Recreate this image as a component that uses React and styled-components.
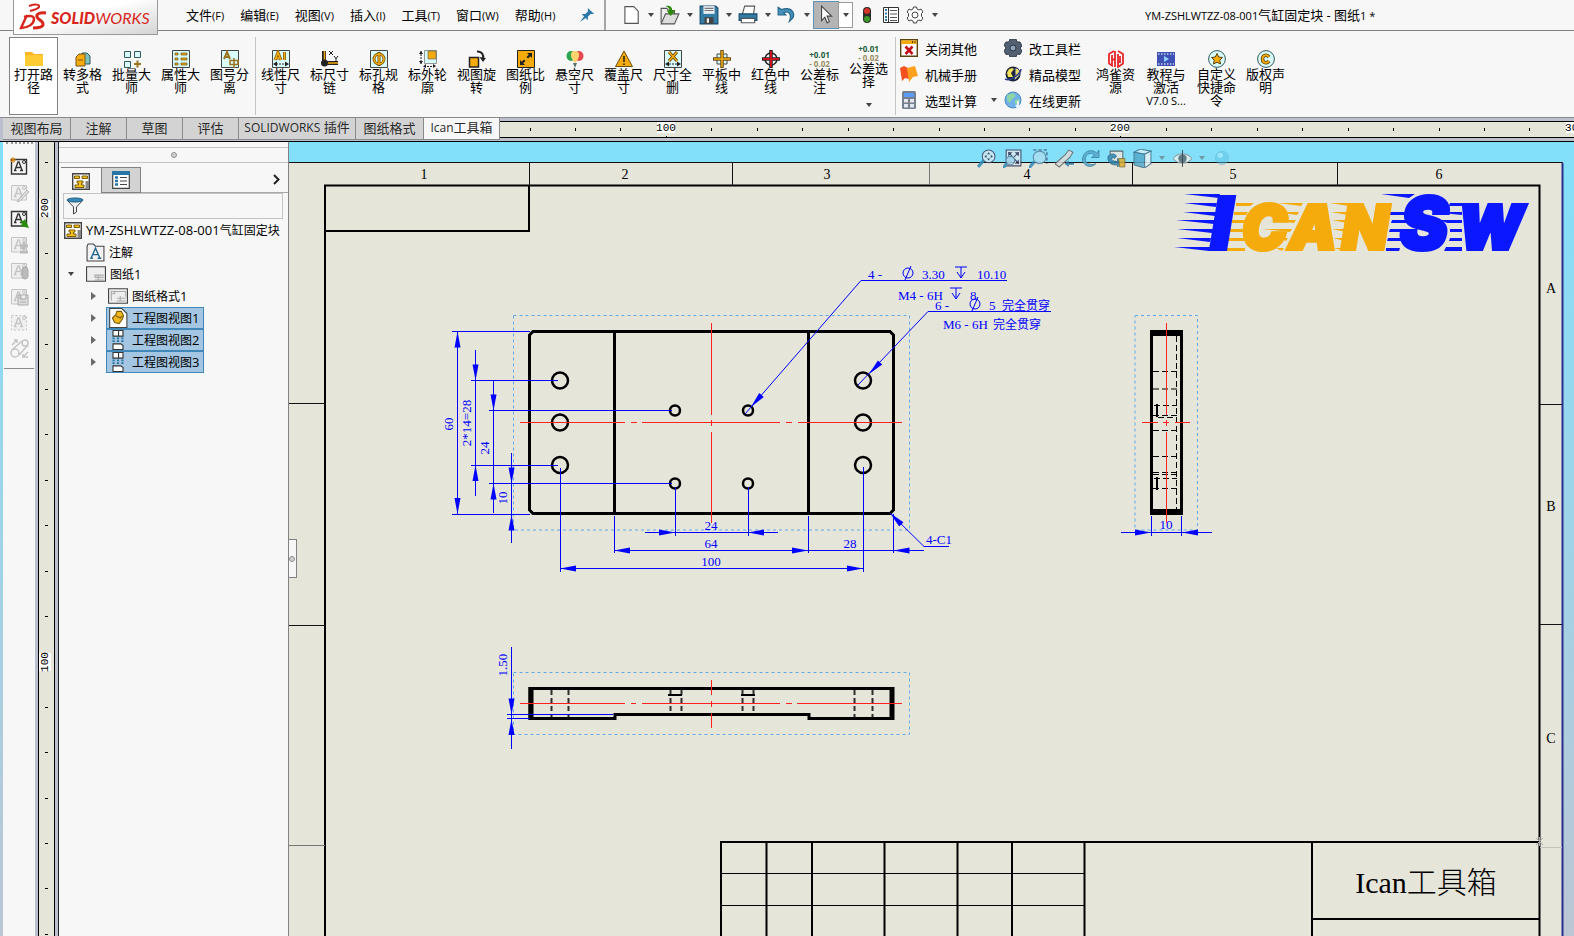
import React from "react";
import styled, { createGlobalStyle, css } from "styled-components";

const SANS = '"Open Sans", "Noto Sans CJK SC", sans-serif';
const DRAFT = '"Liberation Serif", "Noto Sans CJK SC", serif';

const GlobalStyle = createGlobalStyle`
  * { box-sizing: border-box; }
  body { margin: 0; background: #f7f7f7; font-family: ${SANS}; font-size: 13px; color: #000; }
  button, input { font: inherit; color: inherit; margin: 0; padding: 0; border: 0; background: none; }
  ul { list-style: none; margin: 0; padding: 0; }
  svg { display: block; flex: none; }
`;

const AppFrame = styled.div`
  display: flex;
  flex-direction: column;
  height: 100vh;
  overflow: hidden;
`;

/* ---------- title bar ---------- */

const TitleBar = styled.header`
  display: flex;
  align-items: center;
  height: 31px;
  flex: none;
  padding-left: 13px;
  border-bottom: 1px solid #828282;
`;

const Brand = styled.a`
  display: flex;
  align-items: center;
  align-self: flex-start;
  width: 145px;
  height: 35px;
  padding-left: 5px;
  position: relative;
  z-index: 2;
  border: 1px solid #9a9a9a;
  border-top: 0;
  background: linear-gradient(165deg, #ffffff 45%, #d4d4d4 100%);
  color: #d8261c;
  text-decoration: none;
  font: italic 900 16px Lato, sans-serif;
`;

const BrandLight = styled.span`
  font-weight: 400;
`;

const MenuList = styled.nav`
  display: flex;
  gap: 16px;
  padding-left: 28px;
`;

const MenuButton = styled.button`
  display: flex;
  align-items: baseline;
  line-height: 20px;
  white-space: nowrap;
`;

const Hotkey = styled.span`
  font-size: 11px;
`;

const PinButton = styled.button`
  margin-left: 24px;
`;

const QuickBar = styled.div`
  display: flex;
  align-items: center;
  height: 30px;
  margin-left: 9px;
  padding-left: 13px;
  border-left: 2px solid #a5a5a5;
`;

const QuickButton = styled.button`
  display: grid;
  place-items: center;
  width: 24px;
  height: 26px;
  ${(p) => p.$active && css`
    background: #b4b4b4;
    outline: 1px solid #5d93b8;
  `}
`;

const CaretButton = styled.button`
  display: grid;
  place-items: center;
  width: 15px;
  height: 26px;
  ${(p) => p.$framed && css`
    margin-right: 2px;
    border: 1px solid #9a9a9a;
    background: #fff;
  `}
`;

const DocTitle = styled.h1`
  flex: 1;
  margin: 0;
  padding-left: 4px;
  text-align: center;
  font-size: 13px;
  font-weight: 400;
  line-height: 20px;
  white-space: nowrap;
`;

const SmallLatin = styled.span`
  font-size: 11px;
`;

/* ---------- ribbon ---------- */

const Ribbon = styled.div`
  display: flex;
  height: 87px;
  flex: none;
  padding: 6px 0 2px 9px;
  border-bottom: 1px solid #8a8a8a;
`;

const RibbonGroup = styled.div`
  display: flex;
  padding-right: ${(p) => p.$end || 0}px;
  border-right: ${(p) => (p.$last ? 0 : 1)}px solid #c4c4c4;
`;

const RibbonButton = styled.button`
  display: flex;
  flex-direction: column;
  align-items: center;
  width: ${(p) => p.$width || 49}px;
  height: 78px;
  padding-top: ${(p) => (p.$raised ? 6 : 12)}px;
  border: 1px solid ${(p) => (p.$active ? "#828282" : "transparent")};
  background: ${(p) => (p.$active ? "#fff" : "transparent")};
`;

const RibbonLabel = styled.span`
  width: 40px;
  font-size: 13px;
  line-height: 13px;
  text-align: center;
  word-break: break-all;
`;

const RibbonNote = styled.span`
  font-size: 11px;
  line-height: 13px;
  white-space: nowrap;
`;

const Tolerance = styled.span`
  display: flex;
  flex-direction: column;
  height: 18px;
  color: ${(p) => p.color};
  font: 700 8px/9px "Open Sans", sans-serif;
  white-space: nowrap;
`;

const Minus = styled.span`
  color: #968c5e;
`;

const CaretSlot = styled.span`
  margin-top: 15px;
`;

const CommandGrid = styled.div`
  display: grid;
  grid-template-columns: 104px 87px;
  grid-auto-rows: 26px;
  padding-left: 4px;
  margin-top: -2px;
`;

const CommandButton = styled.button`
  display: flex;
  align-items: center;
  gap: 7px;
  white-space: nowrap;
`;

const CommandCaret = styled.span`
  margin-left: 7px;
`;

/* ---------- tab row and rulers ---------- */

const TabRow = styled.div`
  display: flex;
  height: 24px;
  flex: none;
  padding-left: 3px;
  border-bottom: 1px solid #000;
  background: #bcc0cc;
`;

const Tab = styled.button`
  width: ${(p) => p.$width}px;
  height: 22px;
  padding-bottom: 2px;
  border-right: 1px solid #8a8a8a;
  border-bottom: 1px solid #8a8a8a;
  background: ${(p) => (p.$active ? "#f7f7f7" : "#d3d3d3")};
  color: #2a2a2a;
  line-height: 18px;
  white-space: nowrap;
`;

const TabLatin = styled.span`
  font-size: 12px;
`;

const TopRuler = styled.div`
  flex: 1;
  min-width: 0;
  height: 17px;
  margin-top: 3px;
  overflow: hidden;
  border-top: 1px solid #000;
  border-bottom: 1px solid #000;
  background: #e5e5da;
`;

const SideRuler = styled.div`
  width: 23px;
  flex: none;
  overflow: hidden;
  border: solid #bcc0cc;
  border-width: 0 3px;
  background: #e5e5da;
`;

const RulerScale = styled.svg`
  width: 100%;
  height: 100%;
`;

const RulerText = styled.text`
  font: 11px "Liberation Mono", monospace;
  text-anchor: middle;
`;

/* ---------- work area ---------- */

const WorkArea = styled.div`
  display: flex;
  flex: 1;
  min-height: 0;
`;

const WindowEdge = styled.div`
  width: 3px;
  flex: none;
  background: linear-gradient(#82e0fa, #bcc6d4);
`;

const ToolRail = styled.div`
  display: flex;
  flex-direction: column;
  align-items: center;
  width: 32px;
  flex: none;
`;

const RailGrip = styled.div`
  width: 27px;
  height: 3px;
  border-top: 2px dotted #9a9a9a;
`;

const RailList = styled.div`
  display: flex;
  flex-direction: column;
  padding: 8px 0 7px;
  border-bottom: 1px solid #8a8a8a;
`;

const RailButton = styled.button`
  display: grid;
  place-items: center;
  width: 30px;
  height: 26px;
`;

const SidePanel = styled.aside`
  display: flex;
  flex-direction: column;
  width: 231px;
  flex: none;
  border-left: 1px solid #222;
  border-right: 1px solid #828282;
  background: #f7f7f7;
`;

const PanelHandle = styled.div`
  display: grid;
  place-items: center;
  height: 16px;
  margin-top: 5px;
  border: solid #c4c4c4;
  border-width: 1px 0;
`;

const HandleDot = styled.span`
  width: 6px;
  height: 6px;
  border: 1px solid #8f8f8f;
  border-radius: 50%;
  background: #d0d0d0;
`;

const PanelTabs = styled.div`
  display: flex;
  align-items: center;
  height: 26px;
  margin-top: 4px;
  padding-left: 2px;
`;

const PanelTab = styled.button`
  display: grid;
  place-items: center;
  width: 40px;
  height: 26px;
  border-top: 1px solid #828282;
  ${(p) => !p.$active && css`
    border: 1px solid #828282;
    background: #d3d3d3;
  `}
`;

const PanelRest = styled.div`
  display: flex;
  flex: 1;
  align-items: center;
  justify-content: flex-end;
  height: 26px;
  padding-right: 8px;
  border-bottom: 1px solid #a8a8a8;
`;

const FilterBox = styled.label`
  display: flex;
  align-items: center;
  height: 26px;
  margin: 0 5px 0 4px;
  padding-left: 2px;
  border: 1px solid #c4c4c4;
`;

const FilterInput = styled.input`
  flex: 1;
  min-width: 0;
  outline: 0;
`;

const Tree = styled.ul`
  padding-left: 3px;
  font-size: 12px;
`;

const TreeRow = styled.li`
  display: flex;
  align-items: center;
  height: 22px;
  padding-left: ${(p) => p.$indent}px;
`;

const Twisty = styled.button`
  display: grid;
  place-items: center;
  width: 16px;
  height: 20px;
  margin-right: 5px;
`;

const TreeItem = styled.button`
  display: flex;
  align-items: center;
  gap: 4px;
  height: 22px;
  padding: 0 4px 0 1px;
  border: 1px solid ${(p) => (p.$selected ? "#3f88b8" : "transparent")};
  background: ${(p) => (p.$selected ? "#a4c6e2" : "transparent")};
  white-space: nowrap;
`;

const TreeLatin = styled.span`
  font-size: 13px;
`;

const Canvas = styled.main`
  position: relative;
  flex: 1;
  min-width: 0;
  overflow: hidden;
  background: linear-gradient(#82e0fa, #bcc6d4);
`;

const SheetSvg = styled.svg`
  width: 100%;
  height: 100%;
`;

const PanelCollapse = styled.button`
  position: absolute;
  left: -1px;
  top: 50%;
  display: grid;
  place-items: center;
  width: 9px;
  height: 39px;
  border: 1px solid #828282;
  border-left: 0;
  background: #f7f7f7;
`;

const ViewTools = styled.div`
  position: absolute;
  top: 5px;
  left: 684px;
  display: flex;
  align-items: center;
  opacity: 0.85;
`;

const ViewButton = styled.button`
  display: grid;
  place-items: center;
  width: 26px;
  height: 22px;
`;

const ViewCaret = styled.button`
  display: grid;
  place-items: center;
  width: 14px;
  height: 22px;
`;

/* ---------- icons ---------- */

const Icon = ({ size = 18, children }) => (
  <svg width={size} height={size} viewBox="0 0 18 18" aria-hidden="true">{children}</svg>
);

const Caret = ({ fill = "#444" }) => (
  <svg width="6" height="4" viewBox="0 0 6 4" aria-hidden="true"><path d="M0 0H6L3 4Z" fill={fill} /></svg>
);

const G = "#f5ab0c";
const K = "#222";
const T = "#d9fbfa";

const BrandMark = () => (
  <svg width="32" height="28" viewBox="0 0 32 28" aria-hidden="true" fill="none" stroke="#d8261c" strokeWidth="2">
    <path d="M10 3C16 1 21 1 20 4C19 6 15 7 11 8" />
    <path d="M8 12L2 25C9 25 15 21 15 16C15 13 11 12 5 14" strokeWidth="2.400" />
    <path d="M27 10C21 9 17 11 18 14C19 17 25 18 24 22C23 25 18 25 14 25" strokeWidth="3" />
  </svg>
);

const icons = {
  pin: <g fill="#2b78a8"><path d="M10 1L17 8L13 8L10 11L10 15L3 8L7 8L10 5Z" /><path d="M6 10L8 12L1 17Z" /></g>,
  newDoc: <path d="M3.500 1.500H11.500L15.500 5.500V16.500H3.500Z" fill="#fff" stroke="#555" />,
  open: <g><path d="M1 16V3H6L8 5H13V8" fill="#eee" stroke="#555" /><path d="M1 17L5 8H17L13 17Z" fill="#ddd" stroke="#555" /><path d="M5 1C9 0 11 2 11 5H14L9.500 10L6 5H8.500C8.500 3 7 2 5 1Z" fill="#2c8a0c" /></g>,
  save: <g><path d="M1 1H15L17 3V17H1Z" fill="#337ca5" stroke="#174a69" /><path d="M4 1H14V8H4Z" fill="#e9eef0" /><path d="M5 3H13M5 5H13" stroke="#777" /><path d="M5 11H13V17H5Z" fill="#444" /><path d="M7 12H9V16H7Z" fill="#eee" /></g>,
  print: <g><path d="M4 8L6 1H15L14 8" fill="#fff" stroke="#555" /><path d="M1 8H17V14H1Z" fill="#337ca5" stroke="#174a69" /><path d="M3 12H15V16H3Z" fill="#fff" stroke="#555" /></g>,
  undo: <path d="M1 2V9H8L6 7C10 5 14 8 11 15C19 9 14 1 4 4Z" fill="#4590b8" stroke="#24648a" />,
  cursor: <path d="M5 1L14 10L10 10L12 15L10 16L8 11L5 14Z" fill="#fff" stroke="#444" />,
  traffic: <g><rect x="5" y="1" width="8" height="16" rx="4" fill="#2b2b2b" /><circle cx="9" cy="5" r="3" fill="#d6332a" /><circle cx="9" cy="13" r="3" fill="#3d9a28" /></g>,
  options: <g><path d="M1.500 1.500H16.500V16.500H1.500Z" fill="#fff" stroke="#333" /><path d="M6.500 2V16" stroke="#333" /><path d="M3 4H5M3 7.500H5M3 11H5M3 14H5" stroke="#2f7ba5" strokeWidth="2" /><path d="M8 4.500H15M8 8H15M8 11.500H15M8 14.500H15" stroke="#555" /></g>,
  gear: <g fill="#fff" stroke="#444"><path d="M7.500 1H10.500L11 3L13 4L15 3L17 6L15.500 7.500V10.500L17 12L15 15L13 14L11 15L10.500 17H7.500L7 15L5 14L3 15L1 12L2.500 10.500V7.500L1 6L3 3L5 4L7 3Z" /><circle cx="9" cy="9" r="3" /></g>,
  folder: <g><path d="M0 2H7L9 4H18V16H0Z" fill="#ffb521" /><path d="M0 5H18V16H0Z" fill="#ffcb35" /></g>,
  convert: <g strokeLinejoin="round"><path d="M8 3H13L16 6V14H8Z" fill="#7cc3c0" stroke="#31595b" /><path d="M2 7L5 4H11V16H2Z" fill={G} stroke="#77561c" /><path d="M4 10H9" stroke="#77561c" /></g>,
  batch: <g fill={T} stroke="#31595b"><path d="M1.500 1.500H7.500V7.500H1.500ZM11.500 1.500H17.500V7.500H11.500ZM1.500 11.500H7.500V17.500H1.500Z" /><path d="M14.500 10.500V17.500M11 14H18" stroke="#9b7420" strokeWidth="2" /></g>,
  attrs: <g><path d="M.5.500H17.500V17.500H.5Z" fill={T} stroke="#444" /><path d="M3 3H6V5H3ZM3 8H6V10H3ZM3 13H6V15H3ZM9 3H15V5H9ZM9 8H15V10H9ZM9 13H15V15H9Z" fill={G} stroke="#6b5015" strokeWidth=".7" /></g>,
  numbering: <g><path d="M.5.500H17.500V17.500H.5Z" fill={T} stroke="#444" /><path d="M3 9L6 2L9 9M4 7H8" fill="none" stroke="#9b7420" strokeWidth="2" /><path d="M9 10.500H17V14.500H9ZM13 8V18" fill="none" stroke="#9b7420" strokeWidth="1.500" /></g>,
  linear: <g><path d="M.5.500H17.500V17.500H.5Z" fill={T} stroke="#444" /><path d="M3 10L6 2.500L9 10M4 8H8M12.500 2V10" fill="none" stroke="#7d5a10" strokeWidth="3" /><path d="M3 10L6 2.500L9 10M4 8H8M12.500 2V10" fill="none" stroke={G} strokeWidth="1.500" /><path d="M1 14L5 11.500V16.500ZM17 14L13 11.500V16.500Z" fill={K} /><path d="M4 14H14" stroke={K} strokeDasharray="2 1" /></g>,
  chain: <g><path d="M3 1V13H17" fill="none" stroke={K} strokeWidth="4" /><path d="M3.500 1V13H17" fill="none" stroke={G} strokeWidth="1.500" /><circle cx="3.500" cy="13" r="3.500" fill={K} /><path d="M8 1L12 5M12 1L8 5M13 6L15 8.500L17 6M15 8V11" fill="none" stroke={K} /></g>,
  hole: <g><path d="M.5.500H17.500V17.500H.5Z" fill={T} stroke="#444" /><circle cx="9" cy="9" r="5" fill="none" stroke="#6b5015" strokeWidth="3" /><path d="M9 2V16" stroke="#6b5015" strokeWidth="3" /><circle cx="9" cy="9" r="5" fill="none" stroke={G} strokeWidth="1.500" /><path d="M9 3V15" stroke={G} strokeWidth="1.500" /></g>,
  outline: <g><path d="M5.500.500H17.500V13.500H5.500Z" fill={T} stroke="#555" strokeWidth=".6" /><path d="M9 1H17V9H9Z" fill={G} stroke="#555" strokeWidth=".6" /><path d="M2 1V14M5 16.500H17" stroke={K} strokeDasharray="2 1" /><path d="M0 4L2 1L4 4ZM0 11L2 14L4 11ZM7 14L4 16.500L7 18ZM14 14L17 16L14 18Z" fill={K} /></g>,
  rotate: <g><path d="M1.500 7.500H10.500V17H1.500Z" fill={G} stroke={K} strokeWidth="1.500" /><path d="M9 1.500C14 1 16 5 15 9" fill="none" stroke={K} strokeWidth="2" /><path d="M11.500 7L18 8L15 12Z" fill={K} /></g>,
  scale: <g><path d="M.5.500H17.500V17.500H.5Z" fill={G} stroke={K} /><path d="M10 3H15V8L13.300 6.300L11 8.500L9.500 7L11.800 4.800ZM8 15H3V10L4.700 11.700L7 9.500L8.500 11L6.200 13.200Z" fill={K} /></g>,
  balloon: <g><ellipse cx="5" cy="6" rx="4.500" ry="5" fill="#2da44e" /><ellipse cx="13" cy="6" rx="4.500" ry="5" fill="#e5484d" /><path d="M9 1C15 1 14 8 9 13C4 8 3 1 9 1Z" fill="#ffd36b" /><path d="M7 13H11L9 18Z" fill="#58706b" /></g>,
  warning: <g><path d="M9 1L17.500 16.500H.5Z" fill={G} stroke="#6b5015" /><path d="M9 6V12M9 13.500V15" stroke={K} strokeWidth="1.500" /></g>,
  clearDims: <g><path d="M.5.500H17.500V17.500H.5Z" fill={T} stroke="#444" /><path d="M5 2L13 11M13 2L5 11" stroke="#5a430e" strokeWidth="3" /><path d="M5 2L13 11M13 2L5 11" stroke={G} strokeWidth="1.500" /><path d="M1 14L5 11.500V16.500ZM17 14L13 11.500V16.500Z" fill={K} /><path d="M5 14H13" stroke={K} strokeDasharray="2 1" /></g>,
  plateCenter: <g><path d="M4 4H14V14H4Z" fill={T} stroke="#444" /><path d="M9 0V18M0 9H18" stroke="#6b5015" strokeWidth="3.500" /><path d="M9 1V17M1 9H17" stroke={G} strokeWidth="1.500" /></g>,
  redCenter: <g><circle cx="9" cy="9" r="6" fill="none" stroke={K} strokeWidth="1.500" /><path d="M9 0V18M0 9H18" stroke={K} strokeWidth="3.500" /><path d="M9 1V17M1 9H17" stroke="#c8141c" strokeWidth="2" /></g>,
  closeOthers: <g><path d="M.7.700H17.300V17.300H.7Z" fill="#fff" stroke="#5a430e" strokeWidth="1.400" /><path d="M1.400 1.400H16.600V5H1.400Z" fill={G} /><path d="M12 3H13M14.500 3H15.500" stroke={K} strokeWidth="1.500" /><path d="M5.500 7.500L12.500 15M12.500 7.500L5.500 15" stroke="#c4121a" strokeWidth="2.600" /></g>,
  handbook: <g><path d="M0 3L4 1L8 3L9 14L5 13L2 16Z" fill="#f4511e" /><path d="M7 3L15 1L18 11L13 12L9 17Z" fill="#ffa11c" /></g>,
  calculator: <g><rect x="2" y="0" width="14" height="18" rx="1.500" fill="#75808e" /><path d="M4 2H14V6H4Z" fill="#5a9bf6" /><path d="M4 8H8V11.500H4ZM10 8H14V11.500H10ZM4 13H8V16.500H4ZM10 13H14V16.500H10Z" fill="#e3e6ea" /></g>,
  cog: <g><path d="M6 0H12L13 3L16 3L18 7L16 9L18 12L16 15.500L13 15L12 18H6L5 15L2 15.500L0 12L2 9L0 6L2 3H5Z" fill="#536072" stroke="#323b48" /><circle cx="9" cy="9" r="3" fill="#8ea3b8" stroke="#2b3440" /></g>,
  model: <g><circle cx="9" cy="9" r="7.500" fill="#1f2434" /><path d="M3 8C5 2 9 3 10 4L7 8L9 12L4 12Z" fill="#f3e25b" /><path d="M11 3C16 3 17 8 15 11L11 15C9 13 12 10 11 8Z" fill="#e9d96a" stroke="#263a8a" /><path d="M1 14C7 17 17 8 17 4" fill="none" stroke="#2a3c8c" strokeWidth="1.500" /></g>,
  globe: <g><circle cx="9" cy="9" r="8" fill="#6fb1e8" stroke="#4b89bf" /><path d="M3 4L9 2L12 5L8 8L6 12L3 9ZM11 9L16 8L14 14L11 13Z" fill="#8bd6a3" /><path d="M14 10V16M12 14L14 17L17 14" fill="none" stroke="#eaf3fb" strokeWidth="2" /></g>,
  hongque: <g fill="none" stroke="#e8262b" strokeWidth="1.800"><path d="M7 1L2 4V13.500L5 15.500V5M5 9.500H8M8 1V17M11 1L16 4V13.500L11 17V10M11 4V12H13V6" /></g>,
  film: <g><path d="M0 2H18V16H0Z" fill="#3f51b5" /><path d="M1 4H17M1 14H17" stroke="#c5cbe9" strokeWidth="1.500" strokeDasharray="1.500 1.500" /><path d="M7 6L12 9L7 12Z" fill="#8fd0ff" /></g>,
  star: <g><circle cx="9" cy="9" r="8.400" fill={T} stroke="#31595b" /><path d="M9 3.500L10.700 7L14.500 7.500L11.800 10.200L12.500 14L9 12.200L5.500 14L6.200 10.200L3.500 7.500L7.300 7Z" fill={G} stroke="#5a430e" /></g>,
  copyright: <g><circle cx="9" cy="9" r="8.400" fill={T} stroke="#31595b" /><path d="M12 7C10 4 5.500 5 5.500 9C5.500 13 10 14 12 11" fill="none" stroke="#5a430e" strokeWidth="3.500" /><path d="M12 7C10 4 5.500 5 5.500 9C5.500 13 10 14 12 11" fill="none" stroke={G} strokeWidth="1.800" /></g>,
  drawing: <g><path d="M.7 1.700H17.300V17.300H.7Z" fill="#fff" stroke="#444" strokeWidth="1.400" /><path d="M2.500 4H7.500V6.500H2.500ZM10 4H15.500V6.500H10ZM5 9H11V11H9.500V13H12V15.500H3V13H6.500V11H5Z" fill="#f7c21c" stroke="#7a5d0a" /><path d="M13.500 9H17V17H13.500Z" fill="#888" /></g>,
  property: <g><path d="M.7.700H17.300V17.300H.7Z" fill="#fff" stroke="#444" strokeWidth="1.200" /><path d="M0 0H18V4H0Z" fill="#2876a2" /><path d="M3 6.500H6M3 10H6M3 13.500H6" stroke="#2876a2" strokeWidth="2.500" /><path d="M8 6.500H15M8 10H15M8 13.500H15" stroke="#444" strokeWidth="1.200" /></g>,
  funnel: <g><path d="M1 3L7.500 10V17L10.500 15V10L17 3Z" fill="#eee" stroke="#444" /><ellipse cx="9" cy="3" rx="8" ry="2" fill="#3989b5" stroke="#1f5f85" /></g>,
  notes: <g><path d="M1 3L2 1H7L9 3H17V17H1Z" fill="#f2f2f2" stroke="#444" /><path d="M5 14L9 5L13 14M6.500 11H11.500M4 14.500H6.500M11 14.500H14.500" fill="none" stroke="#21668f" strokeWidth="1.300" /></g>,
  sheet: <g><path d="M.5 2.500H17.500V15.500H.5Z" fill="#eee" stroke="#444" /><path d="M8 12V10H16M8 12H16M8 14.500H16M11 10V14" fill="none" stroke="#aaa" /></g>,
  format: <g><path d="M.5 2.500H17.500V15.500H.5Z" fill="#eee" stroke="#444" /><path d="M3 13V5H6V7H3M6 5H16V10M8 11H16M8 13.500H16M11 9V14" fill="none" stroke="#aaa" /></g>,
  partView: <g><path d="M1.500.500H12.500L17 5V17.500H1.500Z" fill="#fff" stroke="#444" /><path d="M4 9L7 6L8 3H12L14 7L13 10L10 14L6 13Z" fill="#f1b91b" stroke="#7a5d0a" /><path d="M7 7L11 9L13 7" fill="none" stroke="#7a5d0a" /></g>,
  projected: <g><path d="M4.500.500H13.500V5.500H4.500ZM9.500.500V5M4.500 12.500H11.500L13.500 14V17.500H4.500Z" fill="#fff" stroke="#333" /><path d="M4 7.500H14M4 10H14" stroke="#2876a2" strokeWidth="1.500" strokeDasharray="2 2" /></g>,
};

const railGlyph = <path d="M5 13L8 5H9L12 13M6 10.500H11M4 13.500H6.500M10 13.500H13" fill="none" stroke="currentColor" strokeWidth="1.400" />;
const RailIcon = ({ kind }) => {
  const live = kind === "add" || kind === "insert";
  const c = live ? "#333" : "#c4c4c4";
  return (
    <svg width="19" height="19" viewBox="0 0 19 19" color={c} aria-hidden="true">
      {kind !== "belt" && <g><path d="M1.500 2.500H16.500V17H1.500Z" fill={live ? "#f4f4f4" : "#f0f0f0"} stroke={c} strokeWidth={live ? 1.4 : 1} strokeDasharray={kind === "edge" ? "2 2" : undefined} />{railGlyph}<circle cx="14" cy="5" r="1.500" fill="none" stroke={c} /></g>}
      {kind === "add" && <path d="M3 0V6M0 3H6M1 1L5 5M5 1L1 5" stroke="#d08312" />}
      {kind === "insert" && <path d="M10 11L13 12L15 10L19 19L10 17L12 15Z" fill="#2c8a0c" />}
      {kind === "edit" && <path d="M8 17L17 7L19 9L10 18L7 19Z" fill="#ddd" stroke="#b8b8b8" />}
      {kind === "plus" && <path d="M14 7V15M10 11H18M10 17H18" stroke="#bbb" strokeWidth="3" />}
      {kind === "lamp" && <rect x="12" y="6" width="6" height="12" rx="3" fill="#bbb" stroke="#aaa" />}
      {kind === "save" && <path d="M8 8H18V18H8ZM10 8V12H16V8M10 15H16" fill="#ddd" stroke="#aaa" />}
      {kind === "belt" && <g fill="none" stroke={c} strokeWidth="1.500"><circle cx="5" cy="14" r="4" /><circle cx="15" cy="4" r="3" /><path d="M2 11L12 2M9 16L18 6M2 6L7 1M4 1H7V4M13 18H18M18 13L13 18V15" /></g>}
    </svg>
  );
};

const viewIcons = {
  zoomFit: <g><path d="M1 17L7 10" stroke="#2e8ab8" strokeWidth="3" /><circle cx="11" cy="7" r="6" fill="#cfeaf3" stroke="#446" /><path d="M11 3L9.500 5H12.500ZM11 11L9.500 9H12.500ZM7 7L9 5.500V8.500ZM15 7L13 5.500V8.500Z" fill="#334" /></g>,
  zoomArea: <g><path d="M3 1H17V16H3Z" fill="#d9ebf0" stroke="#335" /><path d="M5 3H9L5 7ZM15 3V7L11 3ZM15 14V10L11 14Z" fill="#335" /><path d="M5 3L15 14M15 3L9 9" stroke="#335" /><path d="M0 18L4 13" stroke="#2e8ab8" strokeWidth="3" /><circle cx="7" cy="11" r="4" fill="#a9d5ea" stroke="#57829a" /></g>,
  zoomBox: <g><path d="M4 1H17V14" fill="none" stroke="#335" strokeDasharray="3 2" /><path d="M0 18L5 12" stroke="#2e8ab8" strokeWidth="3" /><circle cx="10" cy="8" r="6" fill="#a9ddf1" stroke="#57829a" /></g>,
  previous: <g><path d="M0 14L10 5L13 1L17 3L14 8L4 17Z" fill="#ddd" stroke="#666" /><path d="M9 14L13 11V13H18V15H13V17Z" fill="#2876a2" /></g>,
  roll: <path d="M14 14C8 20 -1 14 2 7C4 1 11 0 15 4L17 1V8H10L13 6C9 2 5 5 4 9C4 14 9 16 14 14Z" fill="#5aa9cf" stroke="#2b7296" strokeWidth=".8" />,
  view3d: <g><path d="M3 2H15V12H3Z" fill="#e8e8e0" stroke="#555" /><path d="M1 7C3 4 8 4 9 7L7 9C5 7 4 9 5 11L10 12V9L14 13L10 17V15C4 16 0 12 1 7Z" fill="#3784ac" stroke="#205472" strokeWidth=".7" /><path d="M11 9H17V17H12Z" fill="#d7ac32" stroke="#705514" strokeWidth=".7" /></g>,
  display: <g stroke="#3d6f88"><path d="M1 3L7 0L17 2L11 5Z" fill="#cfeef8" /><path d="M1 3L11 5V18L1 15Z" fill="#55aacc" /><path d="M11 5L17 2V14L11 18Z" fill="#e6f2f5" /></g>,
  eye: <g><path d="M0 9C5 3 13 3 18 9C13 15 5 15 0 9Z" fill="#e7efee" stroke="#86989d" /><circle cx="9" cy="9" r="4" fill="#5b6b70" /><path d="M9 1V17" stroke="#334" /></g>,
  sphere: <g opacity=".55"><circle cx="9" cy="9" r="7.500" fill="#5cc1e6" stroke="#62aac6" /><circle cx="7" cy="6" r="3" fill="#baf0ff" /></g>,
};

/* ---------- data ---------- */

const menus = [["文件", "F"], ["编辑", "E"], ["视图", "V"], ["插入", "I"], ["工具", "T"], ["窗口", "W"], ["帮助", "H"]];

const fileCommands = [["folder", "打开路径"], ["convert", "转多格式"], ["batch", "批量大师"], ["attrs", "属性大师"], ["numbering", "图号分离"]];

const dimCommands = [["linear", "线性尺寸"], ["chain", "标尺寸链"], ["hole", "标孔规格"], ["outline", "标外轮廓"], ["rotate", "视图旋转"], ["scale", "图纸比例"], ["balloon", "悬空尺寸"], ["warning", "覆盖尺寸"], ["clearDims", "尺寸全删"], ["plateCenter", "平板中线"], ["redCenter", "红色中线"]];

const listCommands = [["closeOthers", "关闭其他"], ["cog", "改工具栏"], ["handbook", "机械手册"], ["model", "精品模型"], ["calculator", "选型计算", true], ["globe", "在线更新"]];

const tabs = [["视图布局", 68], ["注解", 56], ["草图", 56], ["评估", 56]];

const railTools = [["add", "新建注解"], ["edit", "编辑注解"], ["insert", "插入注解"], ["plus", "添加/删除"], ["lamp", "重建"], ["save", "保存"], ["edge", "边框"], ["belt", "皮带链"]];

const range = (n) => Array.from({ length: n }, (_, i) => i);

/* ---------- sheet drawing ---------- */

const BLUE = "#0000ff";

const DimText = styled.text`
  font: 13px ${DRAFT};
  fill: ${BLUE};
  text-anchor: ${(p) => p.$anchor || "middle"};
`;

const HoleText = styled.text`
  font: 13px ${DRAFT};
  fill: ${BLUE};
`;

const HoleCjk = styled(HoleText)`
  font-size: 12px;
`;

const ZoneText = styled.text`
  font: 14px ${DRAFT};
  text-anchor: middle;
`;

const TitleText = styled.text`
  font: 300 30px "Liberation Serif", "Noto Sans CJK SC", serif;
  text-anchor: middle;
`;

const LogoText = styled.text`
  font: italic 900 ${(p) => (p.$big ? 72 : 60)}px Inter, sans-serif;
  fill: ${(p) => p.$fill};
  stroke: ${(p) => p.$fill};
  stroke-width: 4px;
`;

const Arrow = ({ x, y, turn }) => (
  <path d="M0 0L-16 -3V3Z" fill={BLUE} transform={`translate(${x} ${y}) rotate(${turn})`} />
);

const SideDim = ({ x, y, children }) => (
  <DimText transform={`translate(${x} ${y}) rotate(-90)`}>{children}</DimText>
);

const Diameter = ({ x, y }) => (
  <g stroke={BLUE} fill="none"><circle cx={x} cy={y} r="5" /><path d={`M${x - 3} ${y + 7}L${x + 3} ${y - 7}`} /></g>
);

const Depth = ({ x, y }) => (
  <path d={`M${x - 6} ${y - 6}H${x + 6}M${x} ${y - 6}V${y + 5}M${x - 4} ${y - 1}L${x} ${y + 5}L${x + 4} ${y - 1}`} stroke={BLUE} fill="none" />
);

const SheetFrame = () => (
  <g>
    <path d="M280 162.500H1562.500V940H280Z" fill="#e5e5da" stroke="#111" />
    <path d="M1562.500 163V940" stroke="#2a2f8f" strokeWidth="2" />
    <path d="M325 940V185.500H1539.500V940" fill="none" stroke="#000" strokeWidth="2" />
    <path d="M529 186V231H326" fill="none" stroke="#000" strokeWidth="2" />
    <g stroke="#111">
      <path d="M529.500 163V185M732.500 163V185M1132.500 163V185M1337.500 163V185M289 403.500H325M289 625.500H325M1540 404.500H1562M1540 624.500H1562" />
      <path d="M929.500 163V185M289 845.500H325" stroke="#777" />
      <path d="M1540 847.500H1562" stroke="#c4c4bc" />
    </g>
    {[[424, 1], [625, 2], [827, 3], [1027, 4], [1233, 5], [1439, 6]].map(([x, n]) => <ZoneText key={n} x={x} y="179">{n}</ZoneText>)}
    {[["A", 293], ["B", 511], ["C", 743]].map(([n, y]) => <ZoneText key={n} x="1551" y={y}>{n}</ZoneText>)}
  </g>
);

const SheetLogo = () => (
  <g>
    <g fill="#f5ab0c">
      <path d="M1236 203H1254L1250 206H1236ZM1234 212H1248L1246 215H1234ZM1232 220H1246V223H1232ZM1230 229H1245V232H1230ZM1228 238H1244V241H1228ZM1226 248H1245V251H1226Z" />
      <path d="M1278 203H1303L1301 206ZM1276 212H1299L1297 215ZM1270 220H1296L1294 223ZM1262 229H1292L1290 232ZM1280 238H1288L1286 241ZM1276 248H1284L1282 251Z" />
      <path d="M1330 203H1350L1349 206ZM1331 212H1348V215ZM1332 220H1347V223ZM1332 229H1346V232ZM1333 238H1345V241ZM1334 248H1344V251Z" />
    </g>
    <g fill="#0b18ff">
      <path d="M1184 194H1220L1219 198ZM1184 203H1217L1216 207ZM1183 212H1216L1215 216ZM1176 220H1215L1214 224ZM1177 229H1213L1212 233ZM1177 238H1211L1210 242ZM1174 247H1210L1209 251Z" />
      <path d="M1381 194H1415L1409 198ZM1374 212H1409L1408 215H1382ZM1392 220H1408V223H1391ZM1390 229H1409L1417 232H1389ZM1388 238H1404V241H1387ZM1386 248H1400L1399 251H1386Z" />
      <path d="M1450 203H1462V206H1449ZM1432 212H1462V215ZM1440 220H1462V223H1447ZM1450 229H1462V232H1450ZM1450 238H1462V241H1449ZM1446 247H1462V251H1444Z" />
    </g>
    <LogoText $big $fill="#0b18ff" x="1211" y="249">I</LogoText>
    <LogoText $fill="#f5ab0c" x="1242" y="249">C</LogoText>
    <LogoText $fill="#f5ab0c" x="1289" y="249">A</LogoText>
    <LogoText $fill="#f5ab0c" x="1342" y="249">N</LogoText>
    <LogoText $big $fill="#0b18ff" x="1400" y="249">S</LogoText>
    <LogoText $fill="#0b18ff" x="1458" y="249">W</LogoText>
  </g>
);

const ViewBounds = () => (
  <path d="M513.500 315.500H909.500V530H513.500ZM1135 315.500H1197.500V530H1135ZM513.500 672.500H909.500V734.500H513.500Z" fill="none" stroke="#62a9e8" strokeDasharray="3 3" />
);

const FrontView = () => (
  <g>
    <g fill="none" stroke="#000" strokeWidth="3">
      <path d="M533 331.500H890L893.500 335V510L890 513.500H533L529.500 510V335ZM614.500 332V513M808.500 332V513" />
      {[560, 863].map((x) => [380.5, 422.5, 465].map((y) => <circle key={x + y} cx={x} cy={y} r="8" strokeWidth="2.500" />))}
      {[675, 748].map((x) => [410.5, 483.5].map((y) => <circle key={x + y} cx={x} cy={y} r="5" strokeWidth="2.500" />))}
    </g>
    <path d="M520 422.500H625M631 422.500H637M642 422.500H780M786 422.500H792M798 422.500H902M711.500 323V415M711.500 420V426M711.500 432V523" stroke="#ff2020" />
    <path fill="none" stroke={BLUE} d="M452 331.500H530M452 514.500H530M457.500 332V514M471 380.500H558M471 465.500H558M475.500 350V496M489 410.500H672M489 483.500H672M493.500 380V513M511.500 453V543M645 532.500H778M675.500 487V536M748.500 487V536M614 550.500H924M614.500 516V553M808.500 516V553M893.500 514V553M560 568.500H863M560.500 468V572M863.500 467V572M745 414L861 280.500H1007M858 385L928 311.500H1051M890 513L924 546.500H949" />
    <Arrow x="457.500" y="331.500" turn="-90" /><Arrow x="457.500" y="514" turn="90" />
    <Arrow x="475.500" y="380.500" turn="90" /><Arrow x="475.500" y="465" turn="-90" />
    <Arrow x="493.500" y="410.500" turn="90" /><Arrow x="493.500" y="483.500" turn="-90" />
    <Arrow x="511.500" y="483.500" turn="90" /><Arrow x="511.500" y="514.500" turn="-90" />
    <Arrow x="675" y="532.500" turn="0" /><Arrow x="748" y="532.500" turn="180" />
    <Arrow x="614" y="550.500" turn="180" /><Arrow x="808" y="550.500" turn="0" />
    <Arrow x="893.500" y="550.500" turn="180" />
    <Arrow x="560" y="568.500" turn="180" /><Arrow x="863" y="568.500" turn="0" />
    <Arrow x="751" y="407" turn="131" /><Arrow x="869" y="374" turn="134" /><Arrow x="890" y="513" turn="-135" />
    <SideDim x="453" y="424">60</SideDim><SideDim x="471" y="423">2*14=28</SideDim>
    <SideDim x="489" y="448">24</SideDim><SideDim x="507" y="498">10</SideDim>
    <DimText x="711" y="530">24</DimText><DimText x="711" y="548">64</DimText>
    <DimText x="850" y="548">28</DimText><DimText x="711" y="566">100</DimText>
    <DimText $anchor="start" x="926" y="544">4-C1</DimText>
    <HoleText x="868" y="279">4 -</HoleText><Diameter x={908} y={273} /><HoleText x="922" y="279">3.30</HoleText>
    <Depth x={961} y={273} /><HoleText x="977" y="279">10.10</HoleText>
    <HoleText x="898" y="300">M4 - 6H</HoleText><Depth x={956} y={294} /><HoleText x="970" y="300">8</HoleText>
    <HoleText x="935" y="310">6 -</HoleText><Diameter x={975} y={304} /><HoleText x="989" y="310">5</HoleText><HoleCjk x="1002" y="310">完全贯穿</HoleCjk>
    <HoleText x="943" y="329">M6 - 6H</HoleText><HoleCjk x="993" y="329">完全贯穿</HoleCjk>
  </g>
);

const SideView = () => (
  <g>
    <path d="M1151.500 332V513M1181.500 332V513" stroke="#000" strokeWidth="3" />
    <path d="M1150 333H1183M1150 512H1183" stroke="#000" strokeWidth="6" />
    <path d="M1176.500 336V510M1153 371.500H1181M1153 389H1181M1154 405.500H1177M1153 415.500H1181M1158 417.500H1177M1153 430.500H1181M1153 456.500H1181M1153 472.500H1181M1153 474.500H1181M1154 478.500H1177M1153 488.500H1177" stroke="#000" strokeDasharray="6 3" />
    <path d="M1157 404V417M1157 477V490" stroke="#000" strokeWidth="2" />
    <path d="M1166.500 323V415M1166.500 420V426M1166.500 432V523M1142 422.500H1158M1163 422.500H1169M1175 422.500H1190" stroke="#ff2020" />
    <path d="M1121 532.500H1212M1151.500 516V536M1181.500 516V536" stroke={BLUE} />
    <Arrow x="1151" y="532.500" turn="0" /><Arrow x="1182" y="532.500" turn="180" />
    <DimText x="1166" y="529">10</DimText>
  </g>
);

const BottomView = () => (
  <g>
    <path d="M530 688.500H892V718.500H809V714.500H615V718.500H530Z" fill="none" stroke="#000" strokeWidth="3" />
    <path d="M531 687V720M892 687V720" stroke="#000" strokeWidth="5" />
    <path d="M551.500 690V717M568.500 690V717M854.500 690V717M872.500 690V717M670.500 690V713M681.500 690V713M742.500 690V713M753.500 690V713" stroke="#000" strokeWidth="2" strokeDasharray="5 3" strokeOpacity=".8" />
    <path d="M668 695H682M741 695H755" stroke="#000" strokeWidth="2" />
    <path d="M520 703.500H625M631 703.500H636M642 703.500H780M786 703.500H792M797 703.500H902M711.500 680V695M711.500 701V707M711.500 713V728" stroke="#ff2020" />
    <path d="M511.500 647V749M507 714.500H613M507 718.500H530" stroke={BLUE} />
    <Arrow x="511.500" y="714.500" turn="90" /><Arrow x="511.500" y="719" turn="-90" />
    <SideDim x="507" y="665">1.50</SideDim>
  </g>
);

const TitleBlock = () => (
  <g>
    <path d="M721 940V842H1539M1312 842V940M1312 919H1539" fill="none" stroke="#000" strokeWidth="2" />
    <path d="M766.500 842V940M812 842V940M884.500 842V940M957.500 842V940M1012 842V940M1084.500 842V940" stroke="#000" strokeWidth="2" />
    <path d="M721 873.500H1085M721 905.500H1085" stroke="#000" />
    <path d="M1536 838L1543 845M1543 838L1536 845M1539.500 837V846" stroke="#aaa" />
    <TitleText x="1426" y="893">Ican工具箱</TitleText>
  </g>
);

const DrawingSheet = () => (
  <SheetSvg role="img" aria-label="YM-ZSHLWTZZ-08-001气缸固定块">
    <g transform="translate(-289 -142)">
      <SheetFrame />
      <SheetLogo />
      <ViewBounds />
      <FrontView />
      <SideView />
      <BottomView />
      <TitleBlock />
    </g>
  </SheetSvg>
);

/* ---------- screen parts ---------- */

const quickTools = [["newDoc", "新建"], ["open", "打开"], ["save", "保存"], ["print", "打印"], ["undo", "撤销"]];

const Header = () => (
  <TitleBar>
    <Brand href="#home"><BrandMark />SOLID<BrandLight>WORKS</BrandLight></Brand>
    <MenuList>
      {menus.map(([name, key]) => <MenuButton key={key}>{name}<Hotkey>({key})</Hotkey></MenuButton>)}
    </MenuList>
    <PinButton aria-label="固定"><Icon size={16}>{icons.pin}</Icon></PinButton>
    <QuickBar>
      {quickTools.map(([id, name]) => (
        <React.Fragment key={id}>
          <QuickButton aria-label={name}><Icon size={20}>{icons[id]}</Icon></QuickButton>
          <CaretButton aria-label={`${name}选项`}><Caret /></CaretButton>
        </React.Fragment>
      ))}
      <QuickButton $active aria-label="选择"><Icon size={20}>{icons.cursor}</Icon></QuickButton>
      <CaretButton $framed aria-label="选择选项"><Caret /></CaretButton>
      <QuickButton aria-label="重建"><Icon>{icons.traffic}</Icon></QuickButton>
      <QuickButton aria-label="文件属性"><Icon>{icons.options}</Icon></QuickButton>
      <QuickButton aria-label="选项"><Icon>{icons.gear}</Icon></QuickButton>
      <CaretButton aria-label="更多选项"><Caret /></CaretButton>
    </QuickBar>
    <DocTitle><SmallLatin>YM-ZSHLWTZZ-08-001</SmallLatin>气缸固定块 - 图纸<SmallLatin>1 *</SmallLatin></DocTitle>
  </TitleBar>
);

const RibbonCommand = ({ icon, label, ...rest }) => (
  <RibbonButton {...rest}><Icon>{icons[icon]}</Icon><RibbonLabel>{label}</RibbonLabel></RibbonButton>
);

const ToleranceIcon = () => <Tolerance color="#1c5c3a">+0.01<Minus>- 0.02</Minus></Tolerance>;

const CommandRibbon = () => (
  <Ribbon>
    <RibbonGroup $end={1}>
      {fileCommands.map(([icon, label], i) => <RibbonCommand key={icon} icon={icon} label={label} $active={i === 0} />)}
    </RibbonGroup>
    <RibbonGroup $end={2}>
      {dimCommands.map(([icon, label]) => <RibbonCommand key={icon} icon={icon} label={label} />)}
      <RibbonButton><ToleranceIcon /><RibbonLabel>公差标注</RibbonLabel></RibbonButton>
      <RibbonButton $raised><ToleranceIcon /><RibbonLabel>公差选择</RibbonLabel><CaretSlot><Caret /></CaretSlot></RibbonButton>
    </RibbonGroup>
    <RibbonGroup $last>
      <CommandGrid>
        {listCommands.map(([icon, label, more]) => (
          <CommandButton key={icon}><Icon>{icons[icon]}</Icon>{label}{more && <CommandCaret><Caret /></CommandCaret>}</CommandButton>
        ))}
      </CommandGrid>
      <RibbonCommand icon="hongque" label="鸿雀资源" />
      <RibbonButton $width={52}><Icon>{icons.film}</Icon><RibbonLabel>教程与激活</RibbonLabel><RibbonNote>V7.0 S...</RibbonNote></RibbonButton>
      <RibbonCommand icon="star" label="自定义快捷命令" />
      <RibbonCommand icon="copyright" label="版权声明" />
    </RibbonGroup>
  </Ribbon>
);

const HorizontalScale = () => (
  <RulerScale aria-hidden="true">
    {range(40).map((i) => <path key={i} d={`M${Math.round(29.5 + i * 45.45) + 0.5} 6V9`} stroke="#000" />)}
    {[[100, 166], [200, 620], [300, 1075]].map(([n, x]) => (
      <g key={n}><rect x={x - 9} y="0" width="18" height="11" fill="#fff" /><RulerText x={x} y="9">{n}</RulerText><path d={`M${x + 0.5} 14V15`} stroke="#000" /></g>
    ))}
  </RulerScale>
);

const VerticalScale = () => (
  <RulerScale aria-hidden="true">
    {range(60).map((i) => <path key={i} d={`M7 ${Math.round(20 + i * 45.4) + 0.5}H10`} stroke="#000" />)}
    <path d="M.5 0V4000M16.500 0V4000" stroke="#000" />
    {[[200, 66], [100, 520]].map(([n, y]) => (
      <g key={n}><rect x="1" y={y - 9} width="12" height="18" fill="#fff" /><RulerText transform={`translate(10 ${y}) rotate(-90)`}>{n}</RulerText></g>
    ))}
  </RulerScale>
);

const DocumentTabs = () => (
  <TabRow>
    {tabs.map(([name, width]) => <Tab key={name} $width={width}>{name}</Tab>)}
    <Tab $width={117}><TabLatin>SOLIDWORKS</TabLatin> 插件</Tab>
    <Tab $width={68}>图纸格式</Tab>
    <Tab $width={76} $active><TabLatin>Ican</TabLatin>工具箱</Tab>
    <TopRuler><HorizontalScale /></TopRuler>
  </TabRow>
);

const RightTwisty = () => <svg width="5" height="8" viewBox="0 0 5 8" aria-hidden="true"><path d="M0 0L5 4L0 8Z" fill="#6a6a6a" /></svg>;

const ModelTree = () => (
  <Tree>
    <TreeRow $indent={0}><TreeItem><Icon>{icons.drawing}</Icon><span><TreeLatin>YM-ZSHLWTZZ-08-001</TreeLatin>气缸固定块</span></TreeItem></TreeRow>
    <TreeRow $indent={22}><TreeItem><Icon size={19}>{icons.notes}</Icon>注解</TreeItem></TreeRow>
    <TreeRow $indent={1}><Twisty aria-label="折叠"><Caret /></Twisty><TreeItem><Icon size={20}>{icons.sheet}</Icon><span>图纸<TreeLatin>1</TreeLatin></span></TreeItem></TreeRow>
    <TreeRow $indent={23}><Twisty aria-label="展开"><RightTwisty /></Twisty><TreeItem><Icon size={20}>{icons.format}</Icon><span>图纸格式<TreeLatin>1</TreeLatin></span></TreeItem></TreeRow>
    {[1, 2, 3].map((n) => (
      <TreeRow key={n} $indent={23}>
        <Twisty aria-label="展开"><RightTwisty /></Twisty>
        <TreeItem $selected><Icon size={20}>{n === 1 ? icons.partView : icons.projected}</Icon><span>工程图视图<TreeLatin>{n}</TreeLatin></span></TreeItem>
      </TreeRow>
    ))}
  </Tree>
);

const FeaturePanel = () => (
  <SidePanel>
    <PanelHandle><HandleDot /></PanelHandle>
    <PanelTabs>
      <PanelTab $active aria-label="设计树"><Icon>{icons.drawing}</Icon></PanelTab>
      <PanelTab aria-label="属性"><Icon>{icons.property}</Icon></PanelTab>
      <PanelRest>
        <button aria-label="更多"><svg width="7" height="11" viewBox="0 0 7 11"><path d="M1 1L5.500 5.500L1 10" fill="none" stroke="#222" strokeWidth="2" /></svg></button>
      </PanelRest>
    </PanelTabs>
    <FilterBox><Icon>{icons.funnel}</Icon><FilterInput aria-label="筛选" /></FilterBox>
    <ModelTree />
  </SidePanel>
);

const HeadsUpTools = () => (
  <ViewTools>
    {Object.keys(viewIcons).map((id) => (
      <React.Fragment key={id}>
        <ViewButton aria-label={id}><Icon size={id === "sphere" ? 16 : 19}>{viewIcons[id]}</Icon></ViewButton>
        {(id === "display" || id === "eye") && <ViewCaret aria-label={`${id} menu`}><Caret fill="#6c8b94" /></ViewCaret>}
      </React.Fragment>
    ))}
  </ViewTools>
);

export default function App() {
  return (
    <AppFrame>
      <GlobalStyle />
      <Header />
      <CommandRibbon />
      <DocumentTabs />
      <WorkArea>
        <WindowEdge />
        <ToolRail>
          <RailGrip />
          <RailList>
            {railTools.map(([kind, name]) => <RailButton key={kind} aria-label={name}><RailIcon kind={kind} /></RailButton>)}
          </RailList>
        </ToolRail>
        <SideRuler><VerticalScale /></SideRuler>
        <FeaturePanel />
        <Canvas>
          <DrawingSheet />
          <HeadsUpTools />
          <PanelCollapse aria-label="收起面板"><HandleDot /></PanelCollapse>
        </Canvas>
      </WorkArea>
    </AppFrame>
  );
}
